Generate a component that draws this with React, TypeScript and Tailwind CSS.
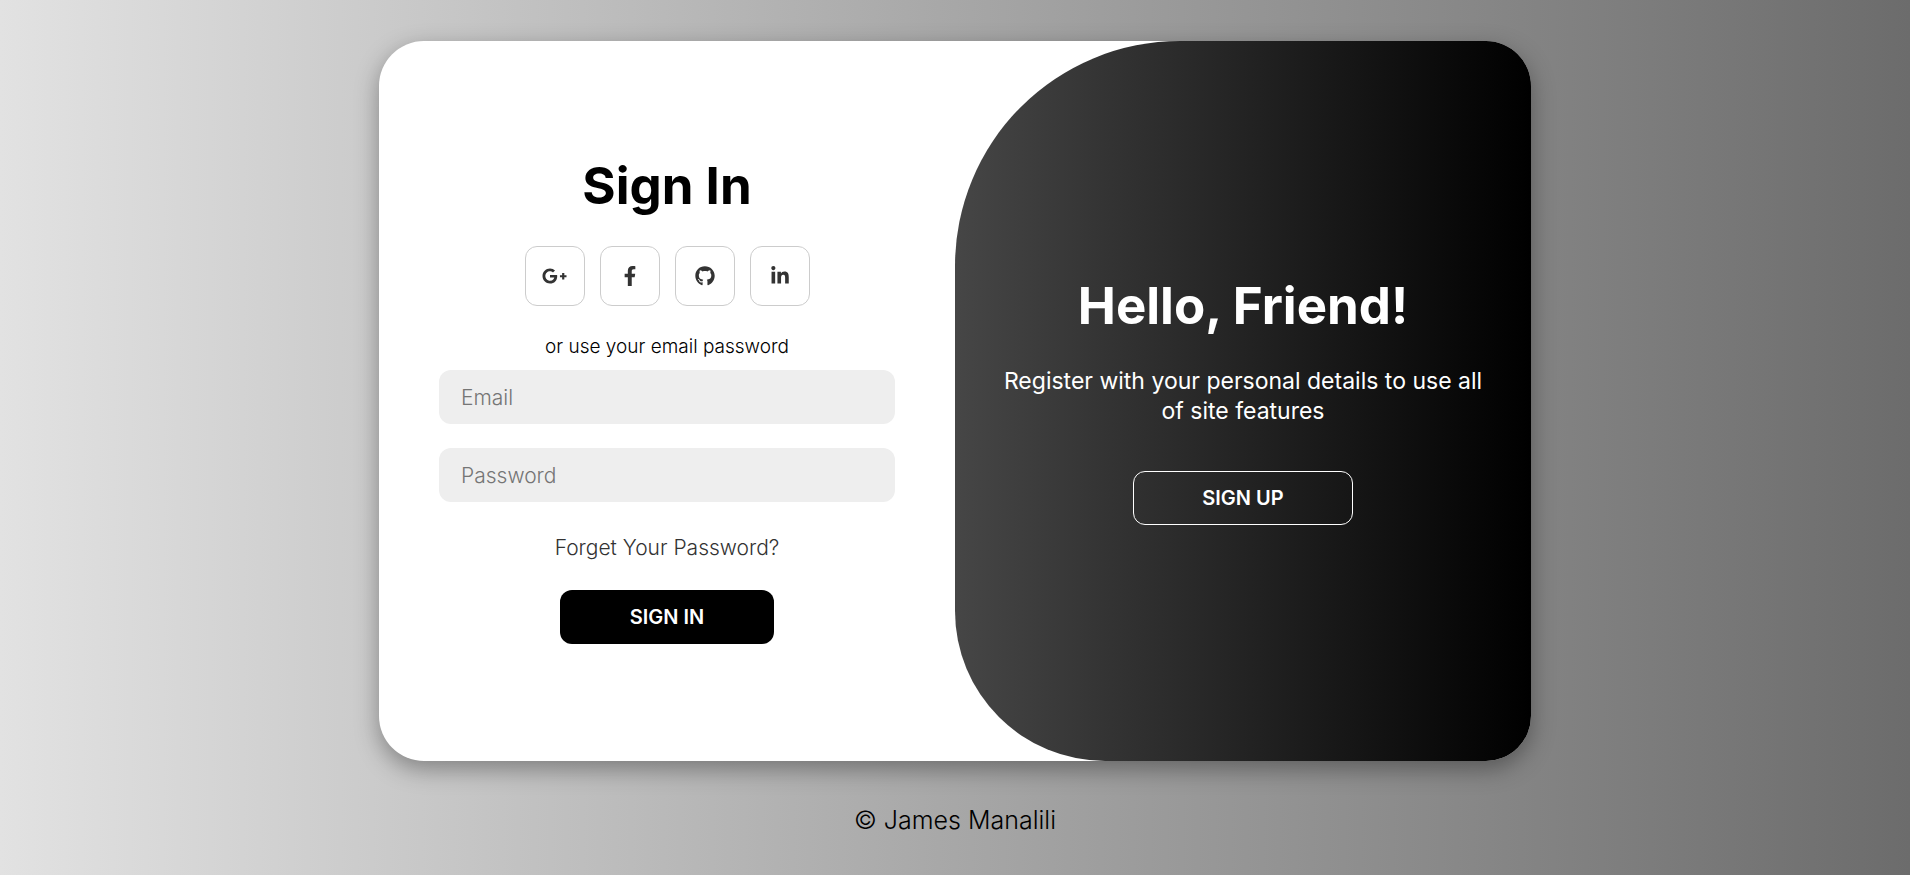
import { FaFacebookF, FaGithub, FaGooglePlusG, FaLinkedinIn } from "react-icons/fa";

const socials = [
  { label: "Google Plus", Icon: FaGooglePlusG, size: "h-5 w-[25px]" },
  { label: "Facebook", Icon: FaFacebookF, size: "h-5 w-5" },
  { label: "GitHub", Icon: FaGithub, size: "h-5 w-5" },
  { label: "LinkedIn", Icon: FaLinkedinIn, size: "h-5 w-5" },
];

const inputClass =
  "h-[54px] w-full rounded-xl bg-[#eee] px-[22px] text-[21px] font-light text-[#333] outline-none placeholder:text-[#757575]";

function SignInForm() {
  return (
    <form
      className="flex flex-col items-center justify-center px-[60px] pt-10 pb-[42px]"
      onSubmit={(event) => event.preventDefault()}
    >
      <h1 className="text-[51px] leading-[60px] font-bold">Sign In</h1>
      <div className="my-[30px] flex gap-[15px]">
        {socials.map(({ label, Icon, size }) => (
          <a
            key={label}
            href="#"
            aria-label={label}
            className="flex size-[60px] items-center justify-center rounded-xl border border-[#ccc] text-[#333]"
          >
            <Icon className={size} />
          </a>
        ))}
      </div>
      <span className="text-[19px] leading-[22px] font-light">or use your email password</span>
      <div className="mt-3 flex w-full flex-col gap-6">
        <input type="email" aria-label="Email" placeholder="Email" className={inputClass} />
        <input type="password" aria-label="Password" placeholder="Password" className={inputClass} />
      </div>
      <a href="#" className="mt-[34px] mb-[30px] text-[21px] leading-6 font-light text-[#333]">
        Forget Your Password?
      </a>
      <button type="submit" className="h-[54px] w-[214px] rounded-xl bg-black text-xl font-semibold text-white">
        SIGN IN
      </button>
    </form>
  );
}

function WelcomePanel() {
  return (
    <section className="flex flex-col items-center justify-center rounded-tl-[225px] rounded-bl-[150px] bg-linear-to-r/srgb from-[#464646] to-black px-[42px] pt-10 pb-[42px] text-center text-white">
      <h1 className="text-[51px] leading-[60px] font-bold">Hello, Friend!</h1>
      <p className="mt-[30px] mb-[45px] text-[23px] leading-[30px]">
        Register with your personal details to use all of site features
      </p>
      <button type="button" className="h-[54px] w-[220px] rounded-xl border border-white text-xl font-semibold">
        SIGN UP
      </button>
    </section>
  );
}

export default function App() {
  return (
    <div className="flex min-h-screen flex-col items-center bg-linear-to-r/srgb from-[#e2e2e2] to-[#6c6c6c] px-6 pt-[41px] font-['Inter',sans-serif] text-black">
      <main className="grid min-h-[720px] w-full max-w-[1152px] grid-cols-2 overflow-hidden rounded-[45px] bg-white shadow-[0_8px_23px_rgba(0,0,0,0.35)]">
        <SignInForm />
        <WelcomePanel />
      </main>
      <footer className="py-11 text-[25px] leading-[30px] font-light">© James Manalili</footer>
    </div>
  );
}
